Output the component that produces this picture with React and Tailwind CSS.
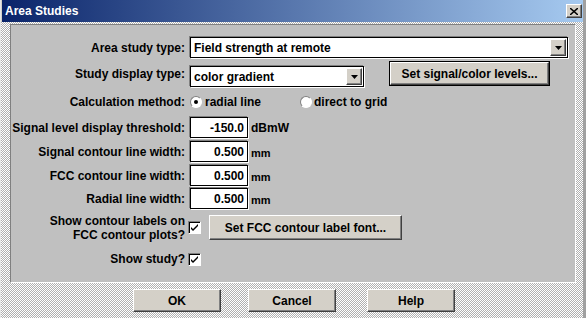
import React from "react";

const font = { fontFamily: '"Liberation Sans", Arial, sans-serif' };

function Arrow() {
  return (
    <div className="w-[16px] h-[17px] bg-[#d4d0c8] border border-t-white border-l-white border-r-[#404040] border-b-[#404040] shadow-[inset_-1px_-1px_0_#808080] flex items-center justify-center">
      <svg width="7" height="4" viewBox="0 0 7 4"><path d="M0 0h7L3.5 4z" fill="#000" /></svg>
    </div>
  );
}

function Combo({ text, w, cls = "" }) {
  return (
    <div className={`${w} ${cls} h-[21px] bg-white border border-black shadow-[-1px_-1px_0_#808080,1px_1px_0_#fff] flex items-center justify-between pl-[3px] pr-[1px]`}>
      <span>{text}</span>
      <Arrow />
    </div>
  );
}

function Input({ v, unit }) {
  return (
    <div className="flex items-center gap-[3px]">
      <div className="w-[58px] h-[21px] bg-white border border-black shadow-[-1px_-1px_0_#808080,1px_1px_0_#fff] flex items-center justify-end pr-[3px]">{v}</div>
      <span className={unit === "mm" ? "text-[11px] mt-[3px]" : ""}>{unit}</span>
    </div>
  );
}

function Btn({ children, cls }) {
  return (
    <div className={`${cls} bg-[#d4d0c8] border border-t-white border-l-white border-r-[#404040] border-b-[#404040] shadow-[inset_-1px_-1px_0_#808080] flex items-center justify-center`}>
      {children}
    </div>
  );
}

function Check() {
  return (
    <div className="w-[13px] h-[13px] bg-white border border-t-[#808080] border-l-[#808080] border-r-white border-b-white shadow-[inset_1px_1px_0_#000] flex items-center justify-center">
      <svg width="9" height="9" viewBox="0 0 9 9"><path d="M1 4l2 2 5-5v2l-5 5-2-2z" fill="#000" /></svg>
    </div>
  );
}

function Radio({ on }) {
  return (
    <div className="w-[12px] h-[12px] rounded-full bg-white border border-t-[#808080] border-l-[#808080] border-r-white border-b-white flex items-center justify-center">
      {on && <div className="w-[4px] h-[4px] rounded-full bg-black" />}
    </div>
  );
}

function Row({ label, h, children, cls = "" }) {
  return (
    <div className={`flex items-center ${h} ${cls}`}>
      <div className="w-[175px] text-right pr-[1px]">{label}</div>
      <div className="ml-[4px] flex items-center self-stretch">{children}</div>
    </div>
  );
}

export default function App() {
  return (
    <div style={font} className="w-[586px] h-[318px] bg-[#d4d0c8] flex flex-col text-[12px] font-bold text-black border-l border-l-[#e8e8e8] border-r-[3px] border-r-[#a0a0a0] overflow-hidden">
      <div className="h-[22px] ml-[1px] bg-[linear-gradient(to_right,#0a246a,#a6caf0)] flex items-center justify-between pl-[3px] pr-[1px]">
        <span className="text-white text-[12px] font-bold">Area Studies</span>
        <Btn cls="w-[16px] h-[14px]">
          <svg width="8" height="7" viewBox="0 0 8 7"><path d="M0 0l8 7M8 0L0 7" stroke="#000" strokeWidth="1.5" /></svg>
        </Btn>
      </div>
      <div className="flex-1 bg-[repeating-conic-gradient(#ffffff_0_25%,#b0b0b0_0_50%)] bg-[length:2px_2px] pl-[9px] pr-[7px] pt-[2px] flex flex-col">
        <div className="h-[259px] bg-[#c0c0c0] border border-t-[#808080] border-l-[#808080] border-r-white border-b-white flex flex-col">
          <Row label="Area study type:" h="h-[21px]" cls="mt-[12px]">
            <Combo text="Field strength at remote" w="w-[378px]" />
          </Row>
          <Row label="Study display type:" h="h-[24px]" cls="mt-[4px]">
            <Combo text="color gradient" w="w-[174px]" cls="self-end mb-[-1px]" />
            <Btn cls="ml-[26px] w-[159px] h-[23px] outline outline-1 outline-black self-start">Set signal/color levels...</Btn>
          </Row>
          <Row label="Calculation method:" h="h-[16px]" cls="mt-[8px]">
            <Radio on />
            <span className="ml-[3px]">radial line</span>
            <div className="ml-[39px]"><Radio /></div>
            <span className="ml-[2px]">direct to grid</span>
          </Row>
          <Row label="Signal level display threshold:" h="h-[21px]" cls="mt-[7px]">
            <Input v="-150.0" unit="dBmW" />
          </Row>
          <Row label="Signal contour line width:" h="h-[21px]" cls="mt-[3px]">
            <Input v="0.500" unit="mm" />
          </Row>
          <Row label="FCC contour line width:" h="h-[21px]" cls="mt-[3px]">
            <Input v="0.500" unit="mm" />
          </Row>
          <Row label="Radial line width:" h="h-[21px]" cls="mt-[2px]">
            <Input v="0.500" unit="mm" />
          </Row>
          <div className="flex items-center h-[27px] mt-[5px]">
            <div className="w-[175px] text-right leading-[14px] pr-[1px]">Show contour labels on<br />FCC contour plots?</div>
            <div className="ml-[2px]"><Check /></div>
            <Btn cls="ml-[8px] w-[193px] h-[25px]">Set FCC contour label font...</Btn>
          </div>
          <div className="flex items-center h-[16px] mt-[10px]">
            <div className="w-[175px] text-right pr-[1px]">Show study?</div>
            <div className="ml-[2px]"><Check /></div>
          </div>
        </div>
        <div className="flex mt-[6px]">
          <Btn cls="ml-[123px] w-[88px] h-[23px]">OK</Btn>
          <Btn cls="ml-[27px] w-[88px] h-[23px]">Cancel</Btn>
          <Btn cls="ml-[31px] w-[88px] h-[23px]">Help</Btn>
        </div>
      </div>
    </div>
  );
}
